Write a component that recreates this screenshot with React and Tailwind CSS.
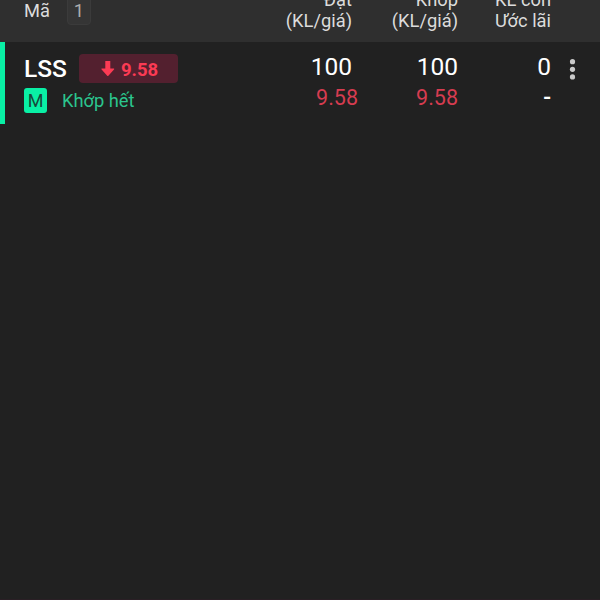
import { useState } from "react";

const columns = [
  { top: "Đặt", bottom: "(KL/giá)", width: "w-[72px]" },
  { top: "Khớp", bottom: "(KL/giá)", width: "w-[106px]" },
  { top: "KL còn", bottom: "Ước lãi", width: "w-[93px]" },
];

const initialOrders = [
  {
    id: 1,
    symbol: "LSS",
    price: "9.58",
    status: "Khớp hết",
    side: "M",
    ordered: "100",
    matched: "100",
    remaining: "0",
    profit: "-",
  },
];

const ArrowDown = () => (
  <svg width="14" height="16" viewBox="0 0 14 16" fill="#fb3b54">
    <path d="M4.300 0h5v7.500h3.300c.6 0 .8.6.4 1l-5.600 6.200a.9.9 0 0 1-1.200 0L.6 8.500c-.4-.4-.2-1 .4-1h3.300z" />
  </svg>
);

const OrderRow = ({ order }) => (
  <div className="flex h-[82px] border-l-[5px] border-[#09f0a5]">
    <div className="w-[275px] pl-[19px] pt-3">
      <div className="flex h-[29px] items-center">
        <span className="w-[55px] pt-px text-[24.5px] leading-[28px] font-medium text-white">{order.symbol}</span>
        <div className="flex h-[29px] w-[99px] items-center gap-[6px] rounded bg-[#53202f] pl-[22px]">
          <ArrowDown />
          <span className="pt-[2px] text-[18.5px] leading-[28px] font-bold text-[#fb3b54]">{order.price}</span>
        </div>
      </div>
      <div className="mt-[5px] flex h-[25px] items-center">
        <span className="flex h-[25px] w-[23px] items-center justify-center rounded-[3px] bg-[#09f0a5] text-[18px] text-[#17483a]">
          {order.side}
        </span>
        <span className="ml-[15px] -mt-px text-[18.3px] leading-[25px] text-[#2bc58e]">{order.status}</span>
      </div>
    </div>

    <div className="w-[72px] pt-[10px] text-right">
      <p className="text-[24.5px] leading-[30px] text-white">{order.ordered}</p>
      <p className="-mr-[6px] text-[21.5px] leading-[32px] text-[#d63c50]">{order.price}</p>
    </div>
    <div className="w-[106px] pt-[10px] text-right">
      <p className="text-[24.5px] leading-[30px] text-white">{order.matched}</p>
      <p className="text-[21.5px] leading-[32px] text-[#d63c50]">{order.price}</p>
    </div>
    <div className="w-[93px] pt-[10px] text-right">
      <p className="text-[24.5px] leading-[30px] text-white">{order.remaining}</p>
      <p className="text-[23px] leading-[32px] font-medium text-white">{order.profit}</p>
    </div>

    <button className="ml-[18px] mt-[17px] h-[21px] w-[7px]">
      <svg width="7" height="21" viewBox="0 0 7 21" fill="#c9c9c9">
        <circle cx="3.500" cy="2.700" r="2.600" />
        <circle cx="3.500" cy="10.300" r="2.600" />
        <circle cx="3.500" cy="17.900" r="2.600" />
      </svg>
    </button>
  </div>
);

const OrderBook = () => {
  const [orders] = useState(initialOrders);

  return (
    <div className="flex h-screen flex-col overflow-hidden border-b border-[#2a1f25] bg-[#212121] font-[Roboto,sans-serif]">
      {/* Table header */}
      <div className="flex h-[42px] shrink-0 overflow-hidden bg-[#2f2f2f] text-[18.3px] leading-[21px] text-[#dcdcdc]">
        <div className="flex w-[280px] items-start pl-6">
          <span className="w-[43px]">Mã</span>
          <span className="-mt-1 h-[29px] w-[24px] rounded-[4px] border border-[#3b3b3b] bg-[#353535] pt-[3px] text-center text-[#adadad]">
            {orders.length}
          </span>
        </div>
        {columns.map((col) => (
          <div key={col.top} className={`${col.width} -mt-[11px] text-right whitespace-nowrap`}>
            <p>{col.top}</p>
            <p>{col.bottom}</p>
          </div>
        ))}
      </div>

      {/* Orders */}
      {orders.map((order) => (
        <OrderRow key={order.id} order={order} />
      ))}
    </div>
  );
};

export default OrderBook;
